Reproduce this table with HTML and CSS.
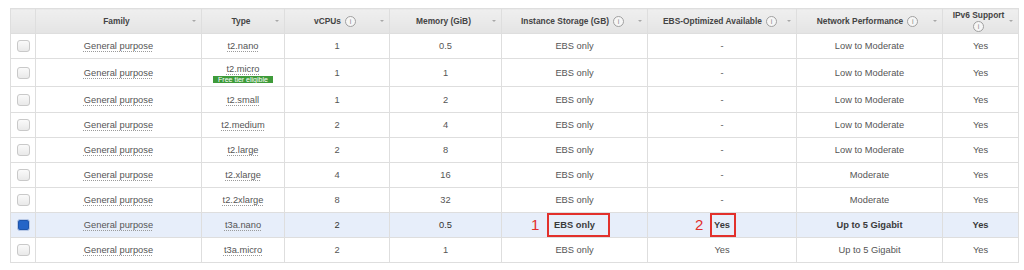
FILE: index.html
```html
<!DOCTYPE html>
<html>
<head>
<meta charset="utf-8">
<link rel="stylesheet" href="styles.css">
</head>
<body>
<table class="grid">
  <colgroup>
    <col class="c-chk"><col class="c-fam"><col class="c-type"><col class="c-cpu"><col class="c-mem"><col class="c-sto"><col class="c-ebs"><col class="c-net"><col class="c-ip">
  </colgroup>
  <thead>
    <tr>
      <th></th>
      <th><div class="h"><span class="lbl">Family</span><span class="arr"></span></div></th>
      <th><div class="h"><span class="lbl">Type</span><span class="arr"></span></div></th>
      <th><div class="h"><span class="lbl">vCPUs <span class="info">i</span></span><span class="arr"></span></div></th>
      <th><div class="h"><span class="lbl">Memory (GiB)</span><span class="arr"></span></div></th>
      <th><div class="h"><span class="lbl">Instance Storage (GB) <span class="info">i</span></span><span class="arr"></span></div></th>
      <th><div class="h"><span class="lbl">EBS-Optimized Available <span class="info">i</span></span><span class="arr"></span></div></th>
      <th><div class="h"><span class="lbl">Network Performance <span class="info">i</span></span><span class="arr"></span></div></th>
      <th><div class="h"><span class="lbl stack">IPv6 Support<span class="info">i</span></span><span class="arr"></span></div></th>
    </tr>
  </thead>
  <tbody>
    <tr class="r25"><td><span class="cb"></span></td><td><span class="dot">General purpose</span></td><td><span class="dot">t2.nano</span></td><td>1</td><td>0.5</td><td>EBS only</td><td>-</td><td>Low to Moderate</td><td>Yes</td></tr>
    <tr class="r28"><td><span class="cb"></span></td><td><span class="dot">General purpose</span></td><td class="typec"><span class="dot">t2.micro</span><span class="free">Free tier eligible</span></td><td>1</td><td>1</td><td>EBS only</td><td>-</td><td>Low to Moderate</td><td>Yes</td></tr>
    <tr class="r26"><td><span class="cb"></span></td><td><span class="dot">General purpose</span></td><td><span class="dot">t2.small</span></td><td>1</td><td>2</td><td>EBS only</td><td>-</td><td>Low to Moderate</td><td>Yes</td></tr>
    <tr class="r25"><td><span class="cb"></span></td><td><span class="dot">General purpose</span></td><td><span class="dot">t2.medium</span></td><td>2</td><td>4</td><td>EBS only</td><td>-</td><td>Low to Moderate</td><td>Yes</td></tr>
    <tr class="r25"><td><span class="cb"></span></td><td><span class="dot">General purpose</span></td><td><span class="dot">t2.large</span></td><td>2</td><td>8</td><td>EBS only</td><td>-</td><td>Low to Moderate</td><td>Yes</td></tr>
    <tr class="r25"><td><span class="cb"></span></td><td><span class="dot">General purpose</span></td><td><span class="dot">t2.xlarge</span></td><td>4</td><td>16</td><td>EBS only</td><td>-</td><td>Moderate</td><td>Yes</td></tr>
    <tr class="r25"><td><span class="cb"></span></td><td><span class="dot">General purpose</span></td><td><span class="dot">t2.2xlarge</span></td><td>8</td><td>32</td><td>EBS only</td><td>-</td><td>Moderate</td><td>Yes</td></tr>
    <tr class="r25 sel"><td><span class="cb on"></span></td><td><span class="dot">General purpose</span></td><td><span class="dot">t3a.nano</span></td><td class="d">2</td><td class="d">0.5</td><td class="b ann-cell">EBS only<span class="ann-num n1">1</span><span class="ann-box b1"></span></td><td class="b ann-cell">Yes<span class="ann-num n2">2</span><span class="ann-box b2"></span></td><td class="b">Up to 5 Gigabit</td><td class="b">Yes</td></tr>
    <tr class="r25"><td><span class="cb"></span></td><td><span class="dot">General purpose</span></td><td><span class="dot">t3a.micro</span></td><td>2</td><td>1</td><td>EBS only</td><td>Yes</td><td>Up to 5 Gigabit</td><td>Yes</td></tr>
  </tbody>
</table>
</body>
</html>
```

FILE: styles.css
```css
html, body { background: #ffffff; }
body {
  margin: 8px 0 0 10px;
  font-family: "Liberation Sans", Arial, Helvetica, sans-serif;
  color: #555555;
}
.grid {
  border-collapse: collapse;
  table-layout: fixed;
  width: 1008px;
}
.c-chk { width: 25px; }
.c-fam { width: 166px; }
.c-type { width: 83px; }
.c-cpu { width: 105px; }
.c-mem { width: 112px; }
.c-sto { width: 146px; }
.c-ebs { width: 149px; }
.c-net { width: 146px; }
.c-ip { width: 76px; }

.grid th, .grid td {
  border: 1px solid #dedede;
  padding: 0;
  text-align: center;
  vertical-align: middle;
}
.grid thead tr { height: 25px; }
.grid th {
  background: linear-gradient(#efefef, #e4e4e4);
  font-size: 8.4px;
  font-weight: bold;
  color: #444444;
}
.h {
  display: flex;
  align-items: center;
  padding: 0 5px;
}
.lbl {
  flex: 1;
  display: flex;
  align-items: center;
  justify-content: center;
  gap: 4px;
  white-space: nowrap;
}
.lbl.stack {
  flex-direction: column;
  gap: 1px;
  line-height: 9px;
}
.arr {
  width: 0;
  height: 0;
  border-left: 2.5px solid transparent;
  border-right: 2.5px solid transparent;
  border-top: 2.5px solid #a8a8a8;
}
.info {
  display: inline-flex;
  align-items: center;
  justify-content: center;
  width: 9px;
  height: 9px;
  border: 1px solid #a0a0a0;
  border-radius: 50%;
  font-size: 7px;
  font-weight: normal;
  color: #888888;
  background: #f6f6f6;
  line-height: 1;
}
.grid td {
  font-size: 9.3px;
  color: #555555;
}
.r25 { height: 25px; }
.r26 { height: 26px; }
.r28 { height: 28px; }

.dot {
  text-decoration: underline dotted #9a9a9a;
  text-underline-offset: 2px;
}
.typec .dot { display: block; margin-top: 2px; }
.free {
  display: inline-block;
  margin-top: 2px;
  background: #3e9b3a;
  color: #ffffff;
  font-size: 7px;
  line-height: 7px;
  padding: 0 2px;
  width: 56px;
  white-space: nowrap;
}
.cb {
  display: inline-block;
  width: 11px;
  height: 10px;
  border: 1px solid #c9c9c9;
  border-radius: 3px;
  background: linear-gradient(#fafafa, #e9e9e9);
  vertical-align: middle;
}
.cb.on {
  background: #2565c7;
  border-color: #b9c9e6;
  box-shadow: inset 0 0 0 1px #1d54ab;
}
.sel td { background: #e7eefa; }
.sel td.b { font-weight: bold; color: #3a3a3a; }
.sel td.d { color: #333333; }

.ann-cell { position: relative; }
.ann-box {
  position: absolute;
  top: 0;
  height: 20px;
  border: 2px solid #e2302b;
}
.b1 { left: 45px; width: 59px; }
.b2 { left: 62px; width: 22px; }
.ann-num {
  position: absolute;
  top: 4px;
  font-size: 15px;
  font-weight: normal;
  color: #e2302b;
  line-height: 15px;
}
.n1 { left: 29px; }
.n2 { left: 47px; }
```
